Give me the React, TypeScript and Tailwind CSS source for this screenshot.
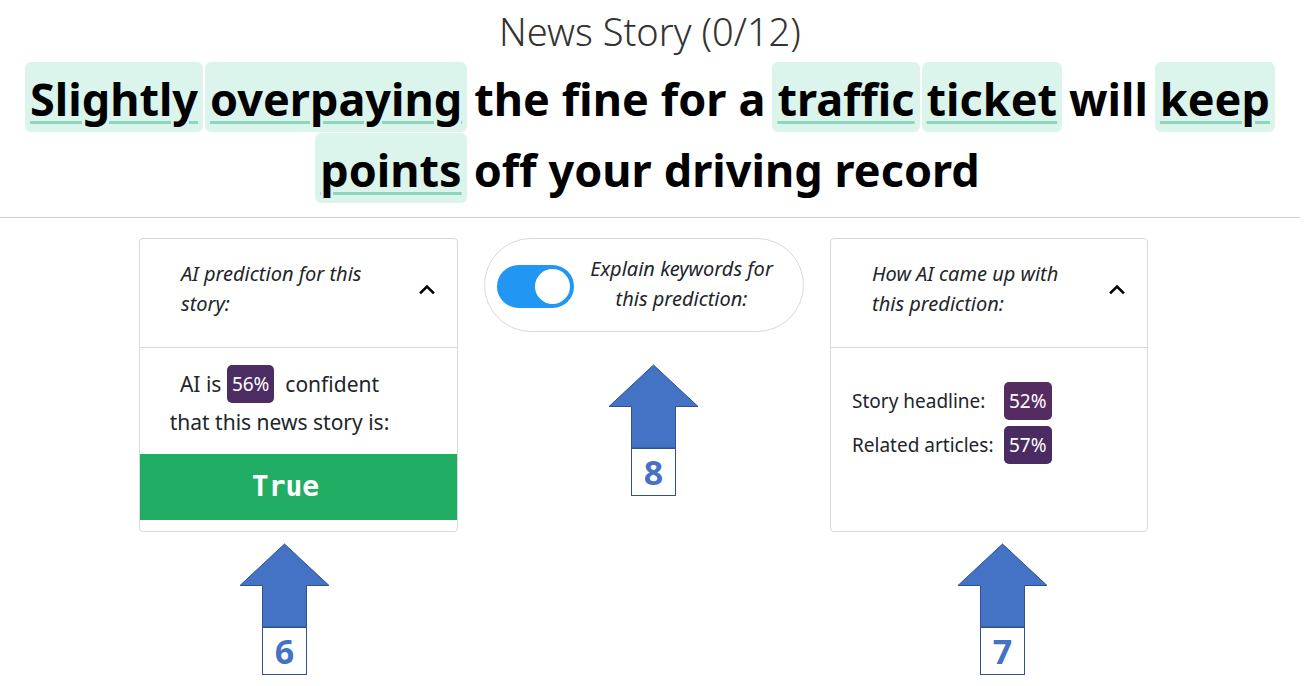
import React from "react";

const FONT = { fontFamily: '"Noto Sans", "Open Sans", sans-serif' };

type W = { t: string; h?: boolean };
const line1: W[] = [
  { t: "Slightly", h: true },
  { t: "overpaying", h: true },
  { t: "the" },
  { t: "fine" },
  { t: "for" },
  { t: "a" },
  { t: "traffic", h: true },
  { t: "ticket", h: true },
  { t: "will" },
  { t: "keep", h: true },
];
const line2: W[] = [
  { t: "points", h: true },
  { t: "off" },
  { t: "your" },
  { t: "driving" },
  { t: "record" },
];

function Word({ w }: { w: W }) {
  return (
    <span
      className={
        "mx-[1px] flex h-[70px] items-center rounded-[6px] px-[5px] pt-[3px] " +
        (w.h
          ? "bg-[#dbf5ec] underline decoration-[#8dd5bd] decoration-[3px] underline-offset-[5px]"
          : "")
      }
    >
      {w.t}
    </span>
  );
}

function Chevron() {
  return (
    <svg width="18" height="12" viewBox="0 0 18 12" className="shrink-0">
      <path d="M3 9.5 L9 3.5 L15 9.5" fill="none" stroke="#000" strokeWidth="2.6" strokeLinecap="square" />
    </svg>
  );
}

function Badge({ v, c }: { v: string; c: string }) {
  return (
    <span
      className={"inline-flex h-[38px] items-center justify-center rounded-[5px] px-[5px] text-[19px] text-white " + c}
    >
      {v}
    </span>
  );
}

function Arrow({ n }: { n: string }) {
  return (
    <div className="flex flex-col items-center">
      <svg width="91" height="84" viewBox="0 0 91 84" className="block">
        <path
          d="M45.5 1 L90 42.5 L67.5 42.5 L67.5 84 L23.5 84 L23.5 42.5 L1 42.5 Z"
          fill="#4472c4"
          stroke="#2f528f"
          strokeWidth="1"
        />
      </svg>
      <div
        className="flex h-[48px] w-[45px] items-center justify-center border border-[#2f528f] bg-white text-[34px] font-bold leading-none text-[#4472c4]"
        style={FONT}
      >
        {n}
      </div>
    </div>
  );
}

export default function App() {
  return (
    <div className="h-[686px] w-[1316px] overflow-hidden bg-white text-[#212529]" style={FONT}>
      <div className="w-[1300px]">
        <div className="flex flex-col items-center">
          <h1 className="mt-[7px] h-[48px] text-[38px] font-light leading-[48px] text-[#333]">News Story (0/12)</h1>
          <div className="mt-[7px] flex flex-col items-center text-[45px] font-bold leading-none text-black">
            <div className="flex justify-center">
              {line1.map((w, i) => (
                <Word key={i} w={w} />
              ))}
            </div>
            <div className="mt-[1px] flex justify-center">
              {line2.map((w, i) => (
                <Word key={i} w={w} />
              ))}
            </div>
          </div>
        </div>
        <div className="mt-[14px] h-px w-full bg-[#cfcfcf]" />

        <div className="flex gap-[26px] pl-[139px] pt-[20px]">
          {/* Card 1 */}
          <div className="flex flex-col">
            <div className="flex h-[294px] w-[319px] flex-col rounded-[4px] border border-[#d9d9d9]">
              <div className="flex h-[109px] items-center justify-between border-b border-[#d9d9d9] pb-[8px] pl-[41px] pr-[21px]">
                <div className="text-[20px] italic leading-[30px] text-[#212529]">
                  AI prediction for this
                  <br />
                  story:
                </div>
                <Chevron />
              </div>
              <div className="flex flex-col items-center pr-[38px] pt-[17px] text-[21px] leading-[38px]">
                <div className="flex items-center">
                  <span>AI is&nbsp;</span>
                  <Badge v="56%" c="bg-[#4b2d63]" />
                  <span>&nbsp;&nbsp;confident</span>
                </div>
                <div>that this news story is:</div>
              </div>
              <div
                className="mt-[13px] flex h-[66px] items-center justify-center bg-[#22ad64] pr-[26px] text-[28px] font-bold text-white"
                style={{ fontFamily: '"DejaVu Sans Mono", "Liberation Mono", monospace' }}
              >
                True
              </div>
            </div>
            <div className="ml-[100px] mt-[11px] w-[91px]">
              <Arrow n="6" />
            </div>
          </div>

          {/* Toggle pill */}
          <div className="flex flex-col">
            <div className="flex h-[94px] w-[320px] items-center rounded-full border border-[#d9d9d9] pl-[12px]">
              <div className="relative mt-[2px] h-[43px] w-[77px] shrink-0 rounded-full bg-[#2196f3]">
                <div className="absolute right-[4px] top-[4px] h-[35px] w-[35px] rounded-full bg-white" />
              </div>
              <div className="flex-1 pb-[2px] pr-[14px] text-center text-[20px] italic leading-[30px] text-[#212529]">
                Explain keywords for
                <br />
                this prediction:
              </div>
            </div>
            <div className="ml-[124px] mt-[32px] w-[91px]">
              <Arrow n="8" />
            </div>
          </div>

          {/* Card 3 */}
          <div className="flex flex-col">
            <div className="flex h-[294px] w-[318px] flex-col rounded-[4px] border border-[#d9d9d9]">
              <div className="flex h-[109px] items-center justify-between border-b border-[#d9d9d9] pb-[8px] pl-[41px] pr-[21px]">
                <div className="text-[20px] italic leading-[30px] text-[#212529]">
                  How AI came up with
                  <br />
                  this prediction:
                </div>
                <Chevron />
              </div>
              <div className="flex flex-col gap-[6px] pl-[21px] pt-[34px] text-[19px]">
                <div className="flex items-center">
                  <span className="w-[152px]">Story headline:</span>
                  <Badge v="52%" c="bg-[#552c5f]" />
                </div>
                <div className="flex items-center">
                  <span className="w-[152px]">Related articles:</span>
                  <Badge v="57%" c="bg-[#4a2c62]" />
                </div>
              </div>
            </div>
            <div className="ml-[127px] mt-[11px] w-[91px]">
              <Arrow n="7" />
            </div>
          </div>
        </div>
      </div>
    </div>
  );
}
